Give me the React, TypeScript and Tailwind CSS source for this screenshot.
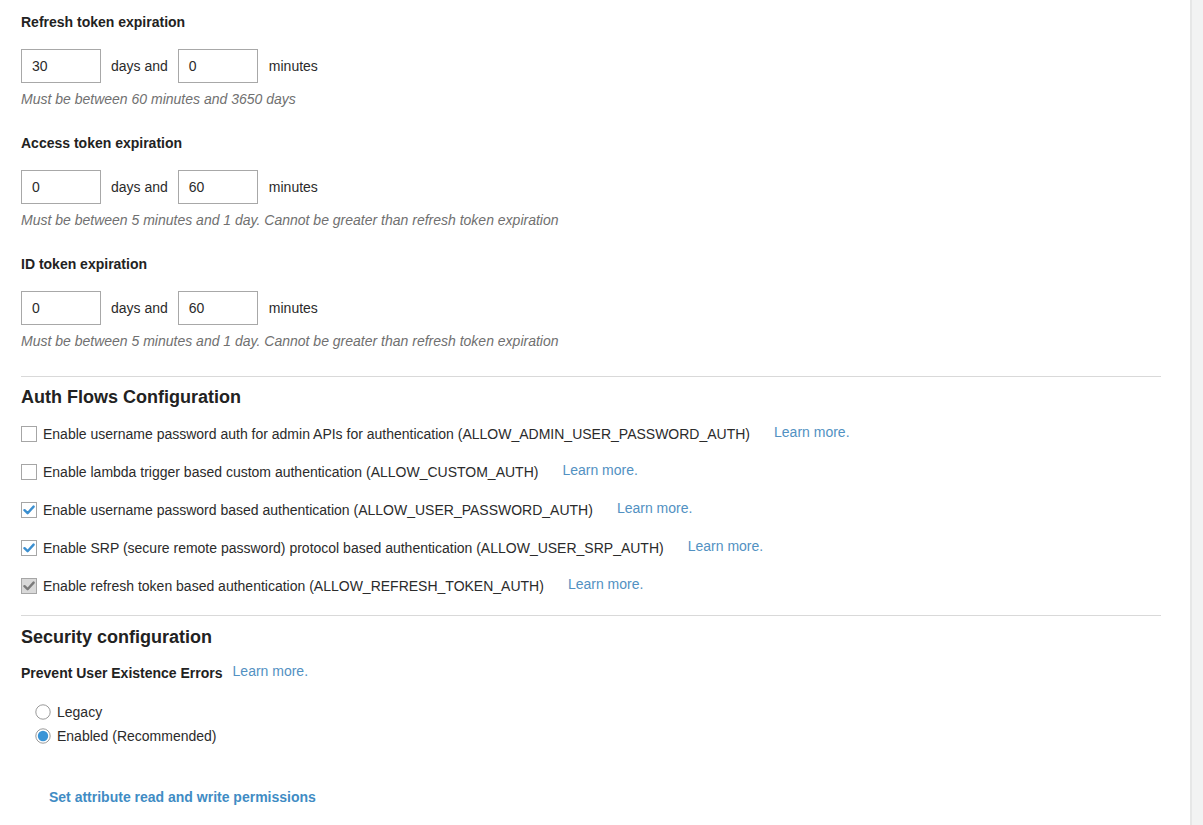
import React from "react";

interface TokenField {
  title: string;
  days: string;
  minutes: string;
  hint: string;
}

interface AuthFlow {
  label: string;
  state: "off" | "on" | "locked";
}

const tokens: TokenField[] = [
  {
    title: "Refresh token expiration",
    days: "30",
    minutes: "0",
    hint: "Must be between 60 minutes and 3650 days",
  },
  {
    title: "Access token expiration",
    days: "0",
    minutes: "60",
    hint: "Must be between 5 minutes and 1 day. Cannot be greater than refresh token expiration",
  },
  {
    title: "ID token expiration",
    days: "0",
    minutes: "60",
    hint: "Must be between 5 minutes and 1 day. Cannot be greater than refresh token expiration",
  },
];

const flows: AuthFlow[] = [
  {
    label: "Enable username password auth for admin APIs for authentication (ALLOW_ADMIN_USER_PASSWORD_AUTH)",
    state: "off",
  },
  {
    label: "Enable lambda trigger based custom authentication (ALLOW_CUSTOM_AUTH)",
    state: "off",
  },
  {
    label: "Enable username password based authentication (ALLOW_USER_PASSWORD_AUTH)",
    state: "on",
  },
  {
    label: "Enable SRP (secure remote password) protocol based authentication (ALLOW_USER_SRP_AUTH)",
    state: "on",
  },
  {
    label: "Enable refresh token based authentication (ALLOW_REFRESH_TOKEN_AUTH)",
    state: "locked",
  },
];

function Checkbox({ state }: { state: AuthFlow["state"] }) {
  const bg = state === "locked" ? "bg-[#d9d9d9]" : "bg-white";
  return (
    <span className={`flex h-[16px] w-[16px] shrink-0 items-center justify-center border border-[#a6a6a6] ${bg}`}>
      {state !== "off" && (
        <svg width="12" height="10" viewBox="0 0 12 10">
          <path
            d="M1.5 5.2 L4.6 8.2 L10.6 1.6"
            fill="none"
            stroke={state === "on" ? "#3b8fd0" : "#7a7a7a"}
            strokeWidth="2.4"
            strokeLinecap="round"
            strokeLinejoin="round"
          />
        </svg>
      )}
    </span>
  );
}

function Radio({ checked }: { checked: boolean }) {
  return (
    <svg width="16" height="16" viewBox="0 0 16 16" className="shrink-0">
      <circle cx="8" cy="8" r="7.2" fill="white" stroke="#9a9a9a" strokeWidth="1" />
      {checked && <circle cx="8" cy="8" r="5.2" fill="#3a94d6" />}
    </svg>
  );
}

function LearnMore({ className = "" }: { className?: string }) {
  return <a className={`pb-[3px] text-[#5291c2] ${className}`}>Learn more.</a>;
}

export default function App() {
  return (
    <div
      className="flex h-[825px] w-full overflow-hidden bg-white text-[14px] text-[#2b2b2b]"
      style={{ fontFamily: '"Liberation Sans", Arial, sans-serif' }}
    >
      <div className="flex-1 pl-[21px] pr-[29px] pt-[14px]">
        {/* Token expiration */}
        {tokens.map((t, i) => (
          <div key={t.title} className={i > 0 ? "mt-[28px]" : ""}>
            <h3 className="text-[14px] font-bold leading-4 text-[#222]">{t.title}</h3>
            <div className="mt-[19px] flex items-center">
              <div className="flex h-[34px] w-[80px] items-center border border-[#a8a8a8] px-[10px]">{t.days}</div>
              <span className="mx-[10px]">days and</span>
              <div className="flex h-[34px] w-[80px] items-center border border-[#a8a8a8] px-[10px]">{t.minutes}</div>
              <span className="ml-[11px]">minutes</span>
            </div>
            <p className="mt-[8px] italic leading-4 text-[#707070]">{t.hint}</p>
          </div>
        ))}

        <div className="mt-[27px] border-t border-[#d9d9d9]" />

        {/* Auth flows */}
        <h2 className="mt-[9px] text-[18px] font-bold leading-[22px] text-[#222]">Auth Flows Configuration</h2>
        <div className="mt-[7px]">
          {flows.map((f) => (
            <div key={f.label} className="flex h-[38px] items-center">
              <Checkbox state={f.state} />
              <span className="ml-[6px]">{f.label}</span>
              <LearnMore className="ml-[24px]" />
            </div>
          ))}
        </div>

        <div className="mt-[10px] border-t border-[#d9d9d9]" />

        {/* Security */}
        <h2 className="mt-[10px] text-[18px] font-bold leading-[22px] text-[#222]">Security configuration</h2>
        <div className="mt-[15px] flex items-center leading-4">
          <span className="font-bold text-[#222]">Prevent User Existence Errors</span>
          <LearnMore className="ml-[10px] pb-0" />
        </div>
        <div className="mt-[18px] pl-[14px]">
          <label className="flex h-[24px] items-center gap-[6px]">
            <Radio checked={false} />
            <span>Legacy</span>
          </label>
          <label className="flex h-[24px] items-center gap-[6px]">
            <Radio checked />
            <span>Enabled (Recommended)</span>
          </label>
        </div>

        <a className="ml-[28px] mt-[41px] block font-bold leading-4 text-[#3f8cc4]">
          Set attribute read and write permissions
        </a>
      </div>

      {/* scrollbar track */}
      <div className="w-[13px] shrink-0 border-l-2 border-[#e6e7e7] bg-[#f2f3f3]" />
    </div>
  );
}
